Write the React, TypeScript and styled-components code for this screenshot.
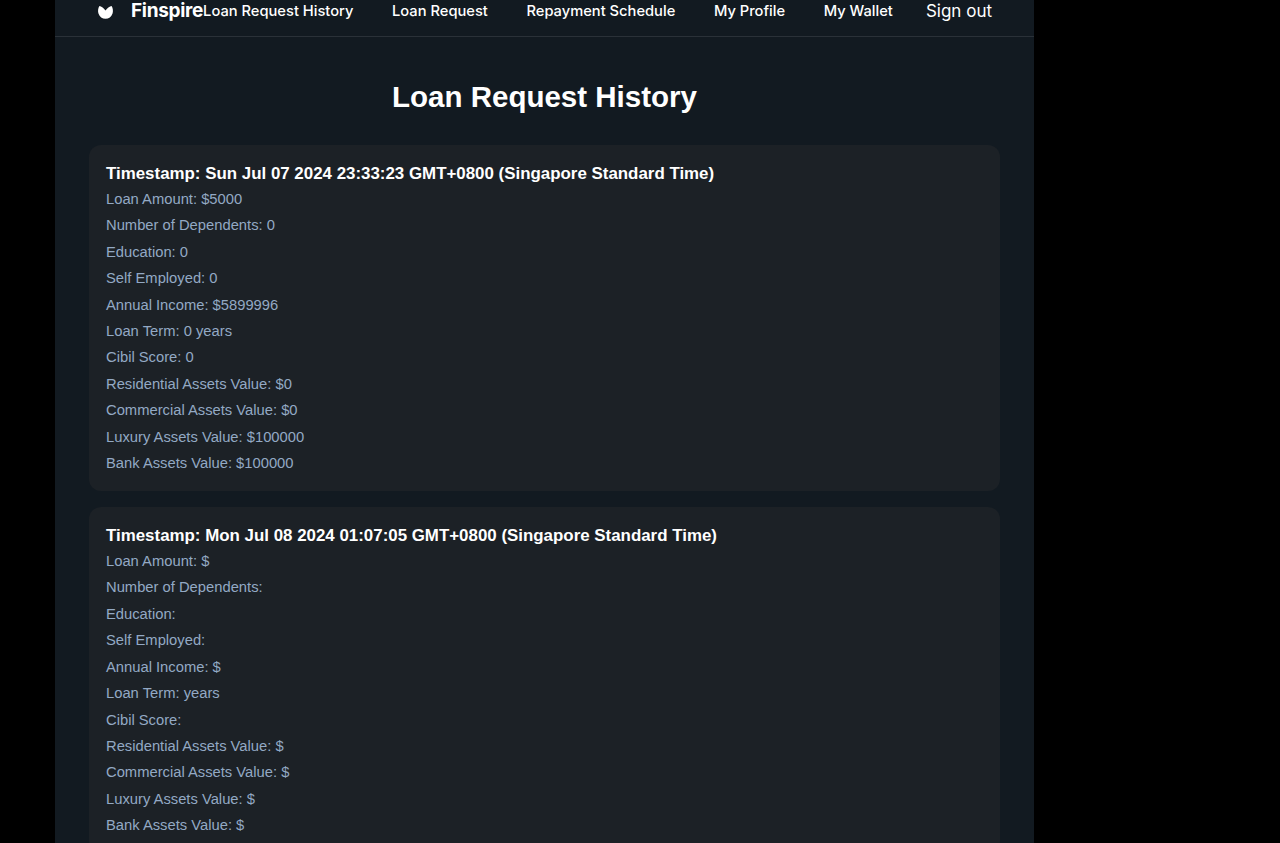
import React from "react";
import styled, { createGlobalStyle } from "styled-components";

const GlobalStyle = createGlobalStyle`
  html, body {
    margin: 0;
    height: 100%;
    overflow: hidden;
    background: #000;
  }
`;

type LoanRequest = {
  timestamp: string;
  amount: string;
  dependents: string;
  education: string;
  selfEmployed: string;
  income: string;
  term: string;
  cibil: string;
  residential: string;
  commercial: string;
  luxury: string;
  bank: string;
};

const requests: LoanRequest[] = [
  {
    timestamp: "Sun Jul 07 2024 23:33:23 GMT+0800 (Singapore Standard Time)",
    amount: "5000",
    dependents: "0",
    education: "0",
    selfEmployed: "0",
    income: "5899996",
    term: "0",
    cibil: "0",
    residential: "0",
    commercial: "0",
    luxury: "100000",
    bank: "100000",
  },
  {
    timestamp: "Mon Jul 08 2024 01:07:05 GMT+0800 (Singapore Standard Time)",
    amount: "",
    dependents: "",
    education: "",
    selfEmployed: "",
    income: "",
    term: "",
    cibil: "",
    residential: "",
    commercial: "",
    luxury: "",
    bank: "",
  },
];

const navLinks = [
  "Loan Request History",
  "Loan Request",
  "Repayment Schedule",
  "My Profile",
  "My Wallet",
];

function App() {
  return (
    <>
      <GlobalStyle />
      <Page>
        <Header>
          <Brand>
            <Logo viewBox="0 0 18 16" aria-hidden="true">
              <path
                d="M2.5 1 C4.5 1.5 7.5 3.5 9 5.8 C10.5 3.5 13.5 1.5 15.5 1 C17 3.5 17.3 6.5 16.5 9 C15.3 12.8 12.5 14.6 9 14.6 C5.5 14.6 2.7 12.8 1.5 9 C0.7 6.5 1 3.5 2.5 1 Z"
                fill="#fff"
              />
            </Logo>
            <BrandName>Finspire</BrandName>
          </Brand>
          <Nav>
            {navLinks.map((link) => (
              <NavLink key={link}>{link}</NavLink>
            ))}
          </Nav>
          <SignOut>Sign out</SignOut>
        </Header>
        <Content>
          <Title>Loan Request History</Title>
          <CardList>
            {requests.map((r) => (
              <Card key={r.timestamp}>
                <Timestamp>Timestamp: {r.timestamp}</Timestamp>
                <Line>Loan Amount: ${r.amount}</Line>
                <Line>Number of Dependents: {r.dependents}</Line>
                <Line>Education: {r.education}</Line>
                <Line>Self Employed: {r.selfEmployed}</Line>
                <Line>Annual Income: ${r.income}</Line>
                <Line>Loan Term: {r.term} years</Line>
                <Line>Cibil Score: {r.cibil}</Line>
                <Line>Residential Assets Value: ${r.residential}</Line>
                <Line>Commercial Assets Value: ${r.commercial}</Line>
                <Line>Luxury Assets Value: ${r.luxury}</Line>
                <Line>Bank Assets Value: ${r.bank}</Line>
              </Card>
            ))}
          </CardList>
        </Content>
      </Page>
    </>
  );
}

const Page = styled.div`
  width: 979px;
  height: 843px;
  margin-left: 55px;
  background: #121a21;
  overflow: hidden;
`;
const Header = styled.header`
  display: flex;
  align-items: center;
  height: 37px;
  padding: 0 42px 15px 42px;
  box-sizing: border-box;
  border-bottom: 1px solid #2a3138;
  font-family: Inter, "Noto Sans", sans-serif;
  color: #fff;
`;
const Brand = styled.div`
  display: flex;
  align-items: center;
  gap: 17px;
`;
const Logo = styled.svg`
  width: 17px;
  height: 15px;
  margin-top: 3px;
`;
const BrandName = styled.span`
  font-size: 19px;
  font-weight: 700;
  letter-spacing: -0.3px;
`;
const Nav = styled.nav`
  display: flex;
  gap: 38.6px;
  flex: 1;
  margin-top: 1px;
`;
const NavLink = styled.a`
  font-size: 14.7px;
  font-weight: 500;
  line-height: 21px;
  white-space: nowrap;
`;
const SignOut = styled.button`
  border: 0;
  padding: 0;
  background: none;
  color: #fff;
  font-family: inherit;
  font-size: 17px;
  font-weight: 400;
  white-space: nowrap;
`;
const Content = styled.main`
  padding: 0 34px;
  font-family: "Liberation Sans", Arial, sans-serif;
`;
const Title = styled.h1`
  margin: 42px 0 30px;
  font-size: 29.5px;
  line-height: 36px;
  font-weight: 700;
  text-align: center;
  color: #fff;
`;
const CardList = styled.div`
  display: flex;
  flex-direction: column;
  gap: 16px;
`;
const Card = styled.section`
  padding: 16px 17px 14.6px;
  background: #1c2126;
  border-radius: 12px;
`;
const Timestamp = styled.h2`
  margin: 0;
  padding: 1px 0 0;
  font-size: 16.9px;
  line-height: 24px;
  font-weight: 700;
  color: #fff;
`;
const Line = styled.p`
  margin: 0;
  font-size: 14.75px;
  line-height: 26.4px;
  color: #93a9c4;
`;

export default App;
